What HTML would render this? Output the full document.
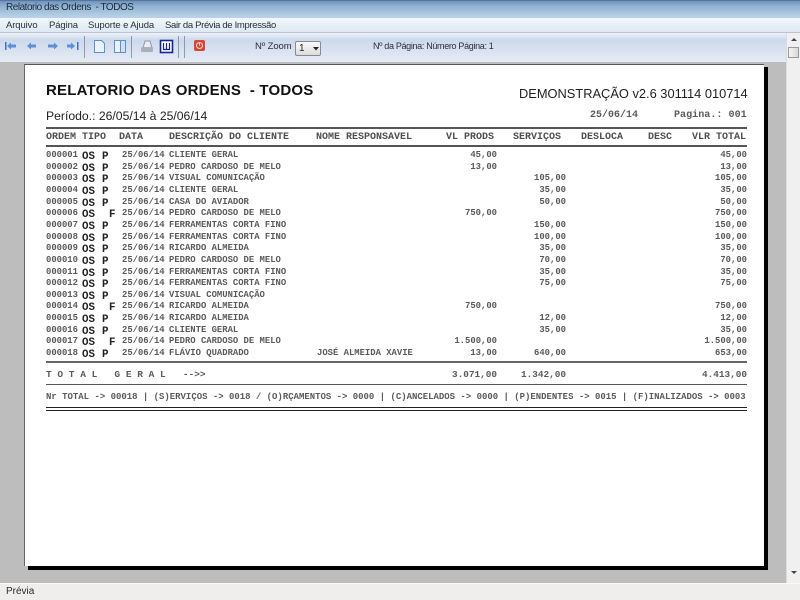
<!DOCTYPE html>
<html><head><meta charset="utf-8"><style>
html,body{margin:0;padding:0}
body{width:800px;height:600px;overflow:hidden;position:relative;background:#bdbdbd;font-family:"Liberation Sans",sans-serif;filter:blur(.3px)}
div,span{position:absolute;white-space:pre}
#title{left:0;top:0;width:800px;height:18px;background:linear-gradient(#3d5a80 0,#6f93bb 1px,#8fb0d2 6px,#b9d1e8 17px)}
#menu{left:0;top:18px;width:800px;height:14px;background:linear-gradient(#f1f6fb,#dde8f4);border-bottom:1px solid #b9c4d2}
#bar{left:0;top:33px;width:786px;height:29px;background:linear-gradient(#eef2f9 0,#ccd9ec 7px,#dfe6f3 22px,#e6ebf5 29px)}
.t{font-size:9.5px;color:#2b2f36;top:0}
#page{left:24px;top:64px;width:740px;height:502px;background:#fff;border-top:1px solid #555;border-left:1px solid #666;box-sizing:border-box}
#sh1{left:764px;top:67px;width:4px;height:503px;background:#000}
#sh2{left:28px;top:566px;width:740px;height:4px;background:#000}
#sb{left:786px;top:33px;width:14px;height:550px;background:#f0f0f0;border-left:1px solid #ddd;box-sizing:border-box}
#status{left:0;top:583px;width:800px;height:17px;background:#f0eded;border-top:1px solid #fafafa;box-sizing:border-box}
.l{left:46px;width:701px;background:#555}
.r{font-family:"Liberation Mono",monospace;font-size:8.9px;color:#2c2c2c;line-height:10px;font-weight:bold;opacity:.78}
.h{font-family:"Liberation Mono",monospace;font-size:10px;color:#222;line-height:12px;top:132px;font-weight:bold;opacity:.8}
.os{font-family:"Liberation Mono",monospace;font-size:10.8px;font-weight:bold;color:#222;line-height:10px}
.v{text-align:right;width:70px}
</style></head><body>
<div id="title"><span style="left:6px;top:2px;font-size:10px;letter-spacing:-.48px;color:#1c2a3a;">Relatorio das Ordens  - TODOS</span></div>
<div id="menu">
<span class="t" style="left:6px;top:2px;letter-spacing:-.1px">Arquivo</span>
<span class="t" style="left:49px;top:2px;letter-spacing:-.1px">Página</span>
<span class="t" style="left:88px;top:2px;letter-spacing:-.1px">Suporte e Ajuda</span>
<span class="t" style="left:165px;top:2px;letter-spacing:-.33px">Sair da Prévia de Impressão</span>
</div>
<div id="bar">
<svg style="position:absolute;left:0;top:0" width="240" height="29" viewBox="0 0 240 29">
<g fill="#5b8fd8">
<rect x="5" y="9" width="1.5" height="8" fill="#3f74c4"/>
<path d="M7 13l4-3.5v2h5v3h-5v2z"/>
<path d="M27 13l4-3.5v2h5v3h-5v2z"/>
<path d="M58 13l-4-3.500v2h-6v3h6v2z"/>
<path d="M75 13l-4-3.500v2h-4v3h4v2z"/>
<rect x="77" y="9" width="1.5" height="8" fill="#3f74c4"/>
</g>
<g stroke="#8a9bb0" fill="none"><path d="M84.5 3v22M131.5 3v22M178.5 3v22M184.5 3v22"/></g>
<path d="M94.500 7.500h7l3 3v9h-10z" fill="#eaf3fd" stroke="#5e8fc8"/>
<rect x="114.500" y="7.500" width="6" height="12" fill="#eaf3fd" stroke="#5e8fc8"/>
<rect x="120.500" y="7.500" width="5" height="12" fill="#cfe0f5" stroke="#5e8fc8"/>
<path d="M143 15l2-7h5l2 7z" fill="#e9edf2" stroke="#8d98a5"/>
<rect x="141" y="14" width="12" height="5" rx="1" fill="#a9b0ba"/>
<rect x="160.500" y="7.500" width="12" height="12" fill="#fff" stroke="#14249a" stroke-width="1.600"/>
<path d="M163.500 10v6.500h6V10M166.500 10v6" fill="none" stroke="#14249a" stroke-width="1.200"/>
<rect x="194" y="7" width="11" height="11" rx="2" fill="#d84530"/>
<circle cx="199.500" cy="12.500" r="3" fill="none" stroke="#fbdcd5"/>
<path d="M199.500 9.500v3" stroke="#fbdcd5"/>
</svg>
<span class="t" style="left:255px;top:8px;font-size:9.5px;letter-spacing:-.1px">Nº Zoom</span>
<div style="left:295px;top:8px;width:26px;height:15px;background:linear-gradient(#fafafa,#dcdcdc);border:1px solid #8a8a8a;border-radius:2px;box-sizing:border-box"><span style="left:3px;top:1px;font-size:10px;color:#222">1</span><svg style="position:absolute;left:17px;top:5px" width="6" height="4"><path d="M0 0h6l-3 3.500z" fill="#222"/></svg></div>
<span class="t" style="left:373px;top:8px;font-size:9px;letter-spacing:-.33px">Nº da Página: Número Página: 1</span>
</div>
<div id="sb">
<svg style="position:absolute;left:3px;top:4px" width="8" height="5"><path d="M1 4l3-3 3 3z" fill="#444"/></svg>
<div style="left:1px;top:14px;width:11px;height:11px;background:linear-gradient(90deg,#f5f5f5,#d8d8d8);border:1px solid #9a9a9a;box-sizing:border-box"></div>
<svg style="position:absolute;left:3px;top:537px" width="8" height="5"><path d="M1 1l3 3 3-3z" fill="#444"/></svg>
</div>
<div id="status"><span style="left:6px;top:2px;font-size:10px;color:#2b2b2b">Prévia</span></div>
<div id="sh1"></div><div id="sh2"></div><div id="page"></div>

<span style="left:46px;top:82px;font-size:15px;font-weight:bold;color:#111;letter-spacing:.2px">RELATORIO DAS ORDENS  - TODOS</span>
<span style="left:46px;top:109px;font-size:12.2px;color:#222">Período.: 26/05/14 à 25/06/14</span>
<span style="left:519px;top:86px;font-size:12.85px;color:#222">DEMONSTRAÇÃO v2.6 301114 010714</span>
<span class="r" style="left:590px;top:111px;font-size:10px">25/06/14</span>
<span class="r" style="left:674px;top:111px;font-size:10.1px;">Pagina.: 001</span>

<div class="l" style="top:127px;height:2px"></div>
<span class="h" style="left:46px">ORDEM</span><span class="h" style="left:82px">TIPO</span><span class="h" style="left:119px">DATA</span><span class="h" style="left:169px">DESCRIÇÃO DO CLIENTE</span><span class="h" style="left:316px">NOME RESPONSAVEL</span><span class="h" style="left:446px">VL PRODS</span><span class="h" style="left:513px">SERVIÇOS</span><span class="h" style="left:581px">DESLOCA</span><span class="h" style="left:648px">DESC</span><span class="h" style="left:692px">VLR TOTAL</span>
<div class="l" style="top:145px;height:2px"></div>

<span class="r" style="left:46px;top:150px">000001</span><span class="os" style="left:82px;top:152px">OS</span><span class="os" style="left:102px;top:152px">P</span><span class="r" style="left:122px;top:150px">25/06/14</span><span class="r" style="left:169px;top:150px">CLIENTE GERAL</span><span class="r v" style="left:427px;top:150px">45,00</span><span class="r v" style="left:677px;top:150px">45,00</span>
<span class="r" style="left:46px;top:162px">000002</span><span class="os" style="left:82px;top:164px">OS</span><span class="os" style="left:102px;top:164px">P</span><span class="r" style="left:122px;top:162px">25/06/14</span><span class="r" style="left:169px;top:162px">PEDRO CARDOSO DE MELO</span><span class="r v" style="left:427px;top:162px">13,00</span><span class="r v" style="left:677px;top:162px">13,00</span>
<span class="r" style="left:46px;top:173px">000003</span><span class="os" style="left:82px;top:175px">OS</span><span class="os" style="left:102px;top:175px">P</span><span class="r" style="left:122px;top:173px">25/06/14</span><span class="r" style="left:169px;top:173px">VISUAL COMUNICAÇÃO</span><span class="r v" style="left:496px;top:173px">105,00</span><span class="r v" style="left:677px;top:173px">105,00</span>
<span class="r" style="left:46px;top:185px">000004</span><span class="os" style="left:82px;top:187px">OS</span><span class="os" style="left:102px;top:187px">P</span><span class="r" style="left:122px;top:185px">25/06/14</span><span class="r" style="left:169px;top:185px">CLIENTE GERAL</span><span class="r v" style="left:496px;top:185px">35,00</span><span class="r v" style="left:677px;top:185px">35,00</span>
<span class="r" style="left:46px;top:197px">000005</span><span class="os" style="left:82px;top:199px">OS</span><span class="os" style="left:102px;top:199px">P</span><span class="r" style="left:122px;top:197px">25/06/14</span><span class="r" style="left:169px;top:197px">CASA DO AVIADOR</span><span class="r v" style="left:496px;top:197px">50,00</span><span class="r v" style="left:677px;top:197px">50,00</span>
<span class="r" style="left:46px;top:208px">000006</span><span class="os" style="left:82px;top:210px">OS</span><span class="os" style="left:109px;top:210px">F</span><span class="r" style="left:122px;top:208px">25/06/14</span><span class="r" style="left:169px;top:208px">PEDRO CARDOSO DE MELO</span><span class="r v" style="left:427px;top:208px">750,00</span><span class="r v" style="left:677px;top:208px">750,00</span>
<span class="r" style="left:46px;top:220px">000007</span><span class="os" style="left:82px;top:222px">OS</span><span class="os" style="left:102px;top:222px">P</span><span class="r" style="left:122px;top:220px">25/06/14</span><span class="r" style="left:169px;top:220px">FERRAMENTAS CORTA FINO</span><span class="r v" style="left:496px;top:220px">150,00</span><span class="r v" style="left:677px;top:220px">150,00</span>
<span class="r" style="left:46px;top:232px">000008</span><span class="os" style="left:82px;top:234px">OS</span><span class="os" style="left:102px;top:234px">P</span><span class="r" style="left:122px;top:232px">25/06/14</span><span class="r" style="left:169px;top:232px">FERRAMENTAS CORTA FINO</span><span class="r v" style="left:496px;top:232px">100,00</span><span class="r v" style="left:677px;top:232px">100,00</span>
<span class="r" style="left:46px;top:243px">000009</span><span class="os" style="left:82px;top:245px">OS</span><span class="os" style="left:102px;top:245px">P</span><span class="r" style="left:122px;top:243px">25/06/14</span><span class="r" style="left:169px;top:243px">RICARDO ALMEIDA</span><span class="r v" style="left:496px;top:243px">35,00</span><span class="r v" style="left:677px;top:243px">35,00</span>
<span class="r" style="left:46px;top:255px">000010</span><span class="os" style="left:82px;top:257px">OS</span><span class="os" style="left:102px;top:257px">P</span><span class="r" style="left:122px;top:255px">25/06/14</span><span class="r" style="left:169px;top:255px">PEDRO CARDOSO DE MELO</span><span class="r v" style="left:496px;top:255px">70,00</span><span class="r v" style="left:677px;top:255px">70,00</span>
<span class="r" style="left:46px;top:267px">000011</span><span class="os" style="left:82px;top:269px">OS</span><span class="os" style="left:102px;top:269px">P</span><span class="r" style="left:122px;top:267px">25/06/14</span><span class="r" style="left:169px;top:267px">FERRAMENTAS CORTA FINO</span><span class="r v" style="left:496px;top:267px">35,00</span><span class="r v" style="left:677px;top:267px">35,00</span>
<span class="r" style="left:46px;top:278px">000012</span><span class="os" style="left:82px;top:280px">OS</span><span class="os" style="left:102px;top:280px">P</span><span class="r" style="left:122px;top:278px">25/06/14</span><span class="r" style="left:169px;top:278px">FERRAMENTAS CORTA FINO</span><span class="r v" style="left:496px;top:278px">75,00</span><span class="r v" style="left:677px;top:278px">75,00</span>
<span class="r" style="left:46px;top:290px">000013</span><span class="os" style="left:82px;top:292px">OS</span><span class="os" style="left:102px;top:292px">P</span><span class="r" style="left:122px;top:290px">25/06/14</span><span class="r" style="left:169px;top:290px">VISUAL COMUNICAÇÃO</span>
<span class="r" style="left:46px;top:301px">000014</span><span class="os" style="left:82px;top:303px">OS</span><span class="os" style="left:109px;top:303px">F</span><span class="r" style="left:122px;top:301px">25/06/14</span><span class="r" style="left:169px;top:301px">RICARDO ALMEIDA</span><span class="r v" style="left:427px;top:301px">750,00</span><span class="r v" style="left:677px;top:301px">750,00</span>
<span class="r" style="left:46px;top:313px">000015</span><span class="os" style="left:82px;top:315px">OS</span><span class="os" style="left:102px;top:315px">P</span><span class="r" style="left:122px;top:313px">25/06/14</span><span class="r" style="left:169px;top:313px">RICARDO ALMEIDA</span><span class="r v" style="left:496px;top:313px">12,00</span><span class="r v" style="left:677px;top:313px">12,00</span>
<span class="r" style="left:46px;top:325px">000016</span><span class="os" style="left:82px;top:327px">OS</span><span class="os" style="left:102px;top:327px">P</span><span class="r" style="left:122px;top:325px">25/06/14</span><span class="r" style="left:169px;top:325px">CLIENTE GERAL</span><span class="r v" style="left:496px;top:325px">35,00</span><span class="r v" style="left:677px;top:325px">35,00</span>
<span class="r" style="left:46px;top:336px">000017</span><span class="os" style="left:82px;top:338px">OS</span><span class="os" style="left:109px;top:338px">F</span><span class="r" style="left:122px;top:336px">25/06/14</span><span class="r" style="left:169px;top:336px">PEDRO CARDOSO DE MELO</span><span class="r v" style="left:427px;top:336px">1.500,00</span><span class="r v" style="left:677px;top:336px">1.500,00</span>
<span class="r" style="left:46px;top:348px">000018</span><span class="os" style="left:82px;top:350px">OS</span><span class="os" style="left:102px;top:350px">P</span><span class="r" style="left:122px;top:348px">25/06/14</span><span class="r" style="left:169px;top:348px">FLÁVIO QUADRADO</span><span class="r" style="left:317px;top:348px">JOSÉ ALMEIDA XAVIE</span><span class="r v" style="left:427px;top:348px">13,00</span><span class="r v" style="left:496px;top:348px">640,00</span><span class="r v" style="left:677px;top:348px">653,00</span>

<div class="l" style="top:361px;height:2px;background:#666"></div>
<span class="r" style="left:46px;top:370px;font-size:9.5px">T O T A L   G E R A L   --&gt;&gt;</span>
<span class="r v" style="left:427px;top:370px;font-size:9.4px">3.071,00</span><span class="r v" style="left:496px;top:370px;font-size:9.4px">1.342,00</span><span class="r v" style="left:677px;top:370px;font-size:9.4px">4.413,00</span>
<div class="l" style="top:384px;height:1px"></div>
<span class="r" style="left:46px;top:392px;font-size:8.97px">Nr TOTAL -&gt; 00018 | (S)ERVIÇOS -&gt; 0018 / (O)RÇAMENTOS -&gt; 0000 | (C)ANCELADOS -&gt; 0000 | (P)ENDENTES -&gt; 0015 | (F)INALIZADOS -&gt; 0003</span>
<div class="l" style="top:407px;height:1px;background:#222"></div>
<div class="l" style="top:410px;height:1px;background:#222"></div>
</body></html>
